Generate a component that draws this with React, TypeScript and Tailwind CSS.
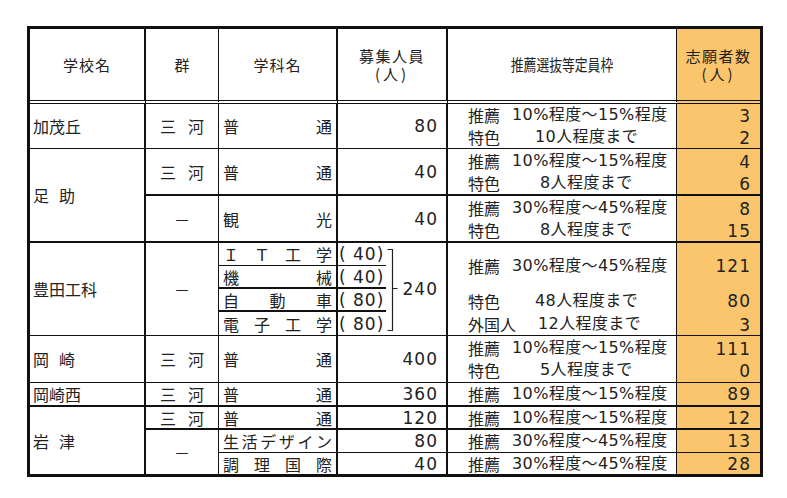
import React from "react";

const sans = "font-['Noto_Sans_CJK_JP',sans-serif]";
const mix = "font-['DejaVu_Sans','Noto_Sans_CJK_JP',sans-serif]";
const num = "font-['DejaVu_Sans','Noto_Sans_CJK_JP',sans-serif] text-[17px] tracking-[1px]";
const orange = "bg-[#fac56c]";

interface SelLine { label: string; w: string; text: string }

const s1015: SelLine = { label: "推薦", w: "w-[44px]", text: "10%程度～15%程度" };
const s3045: SelLine = { label: "推薦", w: "w-[44px]", text: "30%程度～45%程度" };

function Line({ it }: { it: SelLine }) {
  return (
    <div className="flex items-center whitespace-nowrap pl-[20px]">
      <span className={`${it.w} shrink-0 ${sans}`}>{it.label}</span>
      <span className={`${mix} tracking-[0.4px]`}>{it.text}</span>
    </div>
  );
}

function Sel({ items }: { items: SelLine[] }) {
  return (
    <div className="flex flex-col">
      {items.map((it, i) => (
        <div key={i} className="flex h-[22px] items-center">
          <Line it={it} />
        </div>
      ))}
    </div>
  );
}

function Nums({ values }: { values: string[] }) {
  return (
    <div className="flex flex-col">
      {values.map((v, i) => (
        <div key={i} className={`h-[22px] pr-[9px] text-right leading-[24px] ${num}`}>{v}</div>
      ))}
    </div>
  );
}

function Dist({ text }: { text: string }) {
  return (
    <div className="flex h-full items-center justify-between px-[4px]">
      {[...text].map((c, i) => (
        <span key={i}>{c}</span>
      ))}
    </div>
  );
}

function Sanka() {
  return (
    <span>
      <span className="mr-[12px]">三</span>河
    </span>
  );
}

const b = "border-[#111]";

export default function App() {
  return (
    <div className={`h-[498px] w-[787px] bg-white pl-[27px] pt-[26px] text-[16px] leading-[20px] text-[#222] ${sans}`}>
      <table className={`w-[736px] table-fixed border-separate border-spacing-0 border-[3px] ${b}`}>
        <colgroup>
          <col className="w-[116px]" />
          <col className="w-[73px]" />
          <col className="w-[119px]" />
          <col className="w-[110px]" />
          <col className="w-[229px]" />
          <col className="w-[83px]" />
        </colgroup>
        <thead>
          <tr className="h-[75px] text-[15px]">
            <th className={`border-r-2 border-b-4 border-double ${b} font-normal tracking-[1px]`}>学校名</th>
            <th className={`border-r border-b-4 border-double ${b} font-normal`}>群</th>
            <th className={`border-r-2 border-b-4 border-double ${b} font-normal tracking-[1px]`}>学科名</th>
            <th className={`border-r-2 border-b-4 border-double ${b} font-normal leading-[18px]`}>
              <div className="tracking-[1.5px]">募集人員</div>
              <div className="tracking-[3px]">(人)</div>
            </th>
            <th className={`border-r border-b-4 border-double ${b} font-normal`}>
              <span className="inline-block scale-x-[0.8] text-[16px]">推薦選抜等定員枠</span>
            </th>
            <th className={`border-b-4 border-double ${b} ${orange} font-normal leading-[18px]`}>
              <div className="tracking-[1.5px]">志願者数</div>
              <div className="tracking-[3px]">(人)</div>
            </th>
          </tr>
        </thead>
        <tbody>
          {/* 加茂丘 */}
          <tr className="h-[45px]">
            <td className={`border-r-2 border-b ${b} pl-[3px]`}>加茂丘</td>
            <td className={`border-r border-b ${b} text-center`}><Sanka /></td>
            <td className={`border-r-2 border-b ${b}`}><Dist text="普通" /></td>
            <td className={`border-r-2 border-b ${b} pr-[8px] text-right ${num}`}>80</td>
            <td className={`border-r border-b ${b}`}>
              <Sel items={[s1015, { label: "特色", w: "w-[67px]", text: "10人程度まで" }]} />
            </td>
            <td className={`border-b ${b} ${orange}`}><Nums values={["3", "2"]} /></td>
          </tr>
          {/* 足助 */}
          <tr className="h-[47px]">
            <td rowSpan={2} className={`border-r-2 border-b-2 ${b} pl-[3px]`}>
              <span className="mr-[10px]">足</span>助
            </td>
            <td className={`border-r border-b-2 ${b} text-center`}><Sanka /></td>
            <td className={`border-r-2 border-b-2 ${b}`}><Dist text="普通" /></td>
            <td className={`border-r-2 border-b-2 ${b} pr-[8px] text-right ${num}`}>40</td>
            <td className={`border-r border-b-2 ${b}`}>
              <Sel items={[s1015, { label: "特色", w: "w-[72px]", text: "8人程度まで" }]} />
            </td>
            <td className={`border-b-2 ${b} ${orange}`}><Nums values={["4", "6"]} /></td>
          </tr>
          <tr className="h-[47px]">
            <td className={`border-r border-b-2 ${b} text-center`}>－</td>
            <td className={`border-r-2 border-b-2 ${b}`}><Dist text="観光" /></td>
            <td className={`border-r-2 border-b-2 ${b} pr-[8px] text-right ${num}`}>40</td>
            <td className={`border-r border-b-2 ${b}`}>
              <Sel items={[s3045, { label: "特色", w: "w-[72px]", text: "8人程度まで" }]} />
            </td>
            <td className={`border-b-2 ${b} ${orange}`}><Nums values={["8", "15"]} /></td>
          </tr>
          {/* 豊田工科 */}
          <tr className="h-[93px]">
            <td className={`border-r-2 border-b ${b} pl-[3px]`}>豊田工科</td>
            <td className={`border-r border-b ${b} text-center`}>－</td>
            <td className={`border-r-2 border-b ${b} p-0`}>
              <div className="flex h-[92px] flex-col">
                <div className={`h-[23px] border-b ${b}`}><Dist text="ＩＴ工学" /></div>
                <div className={`h-[23px] border-b-2 ${b}`}><Dist text="機械" /></div>
                <div className={`h-[23px] border-b-2 ${b}`}><Dist text="自動車" /></div>
                <div className="flex-1"><Dist text="電子工学" /></div>
              </div>
            </td>
            <td className={`border-r-2 border-b ${b} p-0`}>
              <div className="flex h-[92px]">
                <div className={`flex w-[48px] flex-col ${num}`}>
                  <div className={`flex h-[23px] items-center border-b ${b} pl-[1px]`}>( 40)</div>
                  <div className={`flex h-[23px] items-center border-b-2 ${b} pl-[1px]`}>( 40)</div>
                  <div className={`flex h-[23px] items-center border-b-2 ${b} pl-[1px]`}>( 80)</div>
                  <div className="flex flex-1 items-center pl-[1px]">( 80)</div>
                </div>
                <svg width="12" height="92" viewBox="0 0 12 92" className="shrink-0">
                  <path d="M1.5 6.5H6.5V87.5H1.5M6.5 45.5H11.5" fill="none" stroke="#222" strokeWidth="1.2" />
                </svg>
                <div className={`flex flex-1 items-center justify-end pr-[8px] ${num}`}>240</div>
              </div>
            </td>
            <td className={`border-r border-b ${b}`}>
              <div className="flex h-[92px] flex-col">
                <div className="flex h-[46px] items-center"><Line it={s3045} /></div>
                <div className="flex h-[23px] items-center">
                  <Line it={{ label: "特色", w: "w-[67px]", text: "48人程度まで" }} />
                </div>
                <div className="flex h-[23px] items-center">
                  <Line it={{ label: "外国人", w: "w-[70px]", text: "12人程度まで" }} />
                </div>
              </div>
            </td>
            <td className={`border-b ${b} ${orange}`}>
              <div className={`flex h-[92px] flex-col pr-[9px] text-right ${num}`}>
                <div className="flex h-[46px] items-center justify-end">121</div>
                <div className="flex h-[23px] items-center justify-end">80</div>
                <div className="flex h-[23px] items-end justify-end">3</div>
              </div>
            </td>
          </tr>
          {/* 岡崎 */}
          <tr className="h-[47px]">
            <td className={`border-r-2 border-b ${b} pl-[3px]`}>
              <span className="mr-[10px]">岡</span>崎
            </td>
            <td className={`border-r border-b ${b} text-center`}><Sanka /></td>
            <td className={`border-r-2 border-b ${b}`}><Dist text="普通" /></td>
            <td className={`border-r-2 border-b ${b} pr-[8px] text-right ${num}`}>400</td>
            <td className={`border-r border-b ${b}`}>
              <Sel items={[s1015, { label: "特色", w: "w-[72px]", text: "5人程度まで" }]} />
            </td>
            <td className={`border-b ${b} ${orange}`}><Nums values={["111", "0"]} /></td>
          </tr>
          {/* 岡崎西 */}
          <tr className="h-[24px]">
            <td className={`border-r-2 border-b-2 ${b} pl-[3px]`}>岡崎西</td>
            <td className={`border-r border-b-2 ${b} text-center`}><Sanka /></td>
            <td className={`border-r-2 border-b-2 ${b}`}><Dist text="普通" /></td>
            <td className={`border-r-2 border-b-2 ${b} pr-[8px] text-right ${num}`}>360</td>
            <td className={`border-r border-b-2 ${b}`}><Line it={s1015} /></td>
            <td className={`border-b-2 ${b} ${orange} pr-[9px] text-right ${num}`}>89</td>
          </tr>
          {/* 岩津 */}
          <tr className="h-[23px]">
            <td rowSpan={3} className={`border-r-2 ${b} pl-[3px]`}>
              <span className="mr-[10px]">岩</span>津
            </td>
            <td className={`border-r border-b-2 ${b} text-center`}><Sanka /></td>
            <td className={`border-r-2 border-b-2 ${b}`}><Dist text="普通" /></td>
            <td className={`border-r-2 border-b-2 ${b} pr-[8px] text-right ${num}`}>120</td>
            <td className={`border-r border-b-2 ${b}`}><Line it={s1015} /></td>
            <td className={`border-b-2 ${b} ${orange} pr-[9px] text-right ${num}`}>12</td>
          </tr>
          <tr className="h-[23px]">
            <td rowSpan={2} className={`border-r ${b} text-center`}>－</td>
            <td className={`border-r-2 border-b ${b}`}><Dist text="生活デザイン" /></td>
            <td className={`border-r-2 border-b ${b} pr-[8px] text-right ${num}`}>80</td>
            <td className={`border-r border-b ${b}`}><Line it={s3045} /></td>
            <td className={`border-b ${b} ${orange} pr-[9px] text-right ${num}`}>13</td>
          </tr>
          <tr className="h-[21px]">
            <td className={`border-r-2 ${b}`}><Dist text="調理国際" /></td>
            <td className={`border-r-2 ${b} pr-[8px] text-right ${num}`}>40</td>
            <td className={`border-r ${b}`}><Line it={s3045} /></td>
            <td className={`${orange} pr-[9px] text-right ${num}`}>28</td>
          </tr>
        </tbody>
      </table>
    </div>
  );
}
